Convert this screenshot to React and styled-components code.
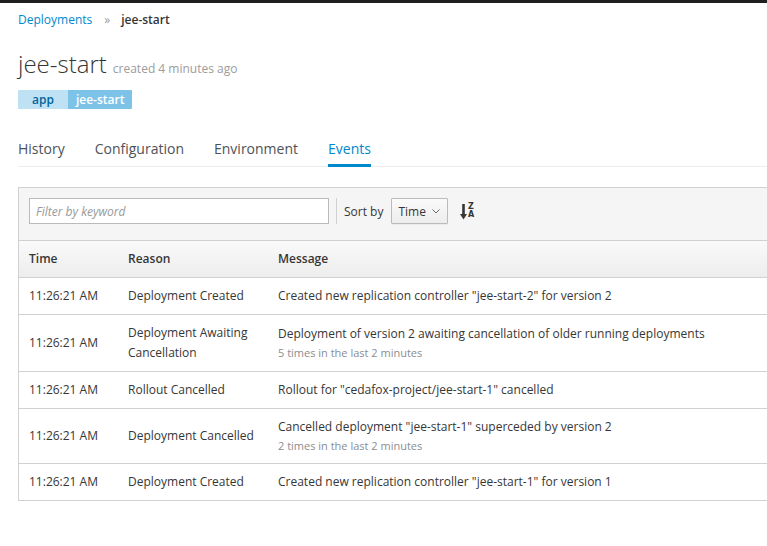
import React from "react";
import styled, { createGlobalStyle } from "styled-components";

const Global = createGlobalStyle`
  html, body { margin: 0; padding: 0; background: #fff; overflow: hidden; }
  body { font-family: "Open Sans", "Noto Sans", sans-serif; color: #363636; font-size: 12px; }
`;

const TopBar = styled.div`
  height: 3px;
  background: #1f1f1f;
`;

const Content = styled.div`
  padding-left: 18px;
  margin-right: -40px;
`;

const Breadcrumb = styled.div`
  display: flex;
  align-items: center;
  gap: 10px;
  margin-top: 7px;
  font-size: 12px;
  line-height: 20px;
`;

const Crumb = styled.a`
  color: #0088ce;
  text-decoration: none;
`;

const CrumbSep = styled.span`
  color: #9c9c9c;
  font-size: 12px;
  padding: 0 1px 0 2px;
`;

const CrumbCurrent = styled.span`
  font-weight: 600;
  color: #363636;
`;

const TitleRow = styled.div`
  display: flex;
  align-items: baseline;
  gap: 6px;
  margin-top: 17px;
`;

const Title = styled.h1`
  margin: 0;
  font-size: 24px;
  font-weight: 300;
  line-height: 33px;
  color: #363636;
`;

const Created = styled.span`
  font-size: 12px;
  color: #9c9c9c;
`;

const Labels = styled.div`
  display: flex;
  margin-top: 10px;
`;

const LabelPart = styled.span`
  display: inline-block;
  height: 19px;
  line-height: 19px;
  font-size: 12px;
  font-weight: 600;
  padding: 0 ${(p) => (p.$value ? "8px" : "14px")};
  background: ${(p) => (p.$value ? "#7dc3e8" : "#bee1f4")};
  color: ${(p) => (p.$value ? "#fff" : "#00659c")};
  border-radius: ${(p) => (p.$value ? "0 1px 1px 0" : "1px 0 0 1px")};
`;

const Tabs = styled.div`
  display: flex;
  gap: 30px;
  margin-top: 30px;
  border-bottom: 1px solid #ededed;
`;

const Tab = styled.a`
  font-size: 14px;
  line-height: 20px;
  padding-bottom: 5px;
  margin-bottom: -1px;
  color: ${(p) => (p.$active ? "#0088ce" : "#4d5258")};
  border-bottom: 3px solid ${(p) => (p.$active ? "#0088ce" : "transparent")};
  text-decoration: none;
`;

const Panel = styled.div`
  margin-top: 20px;
  border: 1px solid #d1d1d1;
`;

const Toolbar = styled.div`
  display: flex;
  align-items: center;
  background: #f5f5f5;
  padding: 10px 10px 16px;
  border-bottom: 1px solid #d1d1d1;
`;

const Filter = styled.input`
  box-sizing: border-box;
  width: 300px;
  height: 26px;
  border: 1px solid #bababa;
  padding: 2px 6px;
  font-family: inherit;
  font-size: 12px;
  background: #fff;
  outline: none;
  &::placeholder { font-style: italic; color: #999; }
`;

const Divider = styled.span`
  width: 1px;
  height: 26px;
  background: #d1d1d1;
  margin: 0 7px;
`;

const SortLabel = styled.span`
  font-size: 12px;
  color: #363636;
  margin-right: 8px;
`;

const SelectBtn = styled.button`
  display: inline-flex;
  align-items: center;
  gap: 6px;
  box-sizing: border-box;
  height: 26px;
  padding: 0 7px 0 6px;
  border: 1px solid #bbb;
  border-radius: 1px;
  background: linear-gradient(#fafafa, #ededed);
  font-family: inherit;
  font-size: 12px;
  color: #363636;
  box-shadow: 0 1px 1px rgba(3, 3, 3, 0.05);
`;

const SortIcon = styled.span`
  display: inline-flex;
  align-items: center;
  margin-left: 12px;
  height: 18px;
  color: #363636;
`;

const Letters = styled.span`
  display: inline-flex;
  flex-direction: column;
  font-size: 8px;
  font-weight: 700;
  line-height: 8px;
  margin-left: 1px;
  font-family: "DejaVu Sans", sans-serif;
`;

const Table = styled.table`
  width: 100%;
  border-collapse: collapse;
  table-layout: fixed;
`;

const Th = styled.th`
  text-align: left;
  font-weight: 600;
  font-size: 12px;
  line-height: 20px;
  padding: 8px 10px;
  background: linear-gradient(#fafafa, #ededed);
  border-bottom: 1px solid #d1d1d1;
  width: ${(p) => p.$w || "auto"};
`;

const Td = styled.td`
  font-size: 12px;
  line-height: 20px;
  padding: 8px 10px;
  border-bottom: ${(p) => (p.$last ? "none" : "1px solid #d1d1d1")};
  vertical-align: middle;
  color: #363636;
`;

const SubText = styled.div`
  font-size: 11px;
  line-height: 18px;
  color: #8b8d8f;
`;

const events = [
  { reason: "Deployment Created", message: 'Created new replication controller "jee-start-2" for version 2' },
  { reason: "Deployment Awaiting Cancellation", message: "Deployment of version 2 awaiting cancellation of older running deployments", sub: "5 times in the last 2 minutes" },
  { reason: "Rollout Cancelled", message: 'Rollout for "cedafox-project/jee-start-1" cancelled' },
  { reason: "Deployment Cancelled", message: 'Cancelled deployment "jee-start-1" superceded by version 2', sub: "2 times in the last 2 minutes" },
  { reason: "Deployment Created", message: 'Created new replication controller "jee-start-1" for version 1' },
];

export default function App() {
  return (
    <>
      <Global />
      <TopBar />
      <Content>
        <Breadcrumb>
          <Crumb href="#">Deployments</Crumb>
          <CrumbSep>»</CrumbSep>
          <CrumbCurrent>jee-start</CrumbCurrent>
        </Breadcrumb>
        <TitleRow>
          <Title>jee-start</Title>
          <Created>created 4 minutes ago</Created>
        </TitleRow>
        <Labels>
          <LabelPart>app</LabelPart>
          <LabelPart $value>jee-start</LabelPart>
        </Labels>
        <Tabs>
          <Tab>History</Tab>
          <Tab>Configuration</Tab>
          <Tab>Environment</Tab>
          <Tab $active>Events</Tab>
        </Tabs>
        <Panel>
          <Toolbar>
            <Filter placeholder="Filter by keyword" />
            <Divider />
            <SortLabel>Sort by</SortLabel>
            <SelectBtn>
              Time
              <svg width="8" height="5" viewBox="0 0 8 5">
                <path d="M0.5 0.5 L4 4 L7.5 0.5" fill="none" stroke="#6b6b6b" strokeWidth="1" />
              </svg>
            </SelectBtn>
            <SortIcon>
              <svg width="7" height="17" viewBox="0 0 7 17">
                <rect x="2.2" y="1" width="2.6" height="11" fill="#363636" />
                <path d="M0 11 L7 11 L3.5 16.5 Z" fill="#363636" />
              </svg>
              <Letters>
                <span>Z</span>
                <span>A</span>
              </Letters>
            </SortIcon>
          </Toolbar>
          <Table>
            <thead>
              <tr>
                <Th $w="79px">Time</Th>
                <Th $w="130px">Reason</Th>
                <Th>Message</Th>
              </tr>
            </thead>
            <tbody>
              {events.map((e, i) => (
                <tr key={i}>
                  <Td $last={i === events.length - 1}>11:26:21 AM</Td>
                  <Td $last={i === events.length - 1}>{e.reason}</Td>
                  <Td $last={i === events.length - 1}>
                    {e.message}
                    {e.sub && <SubText>{e.sub}</SubText>}
                  </Td>
                </tr>
              ))}
            </tbody>
          </Table>
        </Panel>
      </Content>
    </>
  );
}
